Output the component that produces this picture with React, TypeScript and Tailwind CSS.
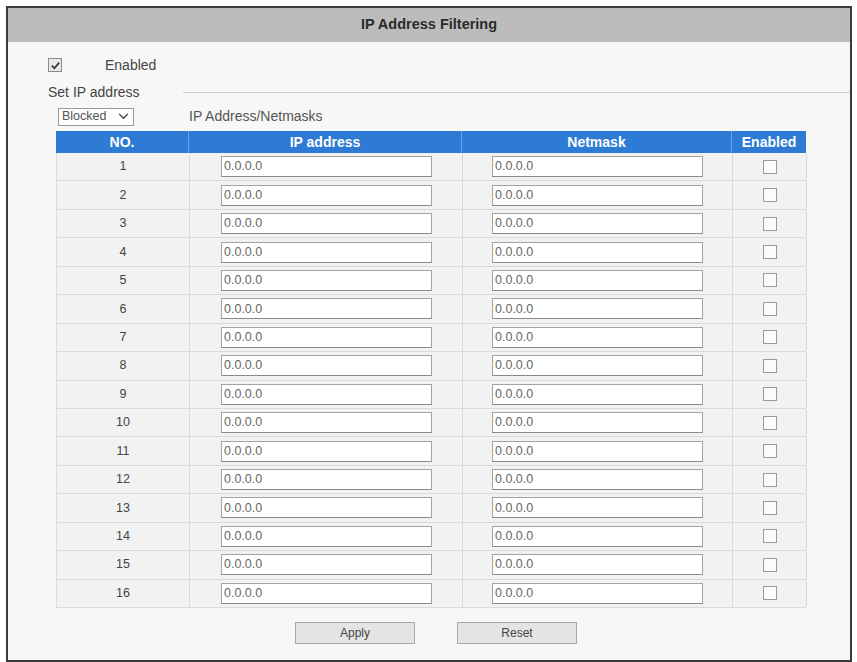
import React from 'react';

const rows = Array.from({ length: 16 }, (_, i) => i + 1);

function CheckMark() {
  return (
    <span className="flex h-[14px] w-[14px] items-center justify-center border border-[#8a8a8a] bg-[#e9e9e9]">
      <svg viewBox="0 0 12 12" className="h-[11px] w-[11px]">
        <path d="M2 6.2 L4.8 9 L10 2.8" fill="none" stroke="#333" strokeWidth="1.9" />
      </svg>
    </span>
  );
}

export default function App() {
  return (
    <div className="h-[662px] w-[857px] bg-white pl-[6px] pt-[6px] font-['Liberation_Sans',Arial,sans-serif] text-[#333]">
      <div className="flex h-[656px] w-[846px] flex-col border-2 border-[#3a3a3a] bg-[#f7f7f7]">
        <div className="flex h-[34px] items-center justify-center bg-[#bcbcbc] text-[14.5px] font-bold text-[#2b2b2b]">
          IP Address Filtering
        </div>

        <div className="flex flex-col pl-[40px]">
          <div className="mt-[16px] flex h-[14px] items-center">
            <CheckMark />
            <span className="ml-[43px] text-[14px] text-[#444]">Enabled</span>
          </div>

          <div className="mt-[13px] flex h-[14px] items-center">
            <span className="text-[14px] text-[#444]">Set IP address</span>
            <div className="ml-[43px] mt-[1px] h-px flex-1 bg-[#d2d2d2]" />
          </div>

          <div className="mt-[8px] flex h-[19px] items-center pl-[10px]">
            <div className="flex h-[18px] w-[76px] items-center justify-between border border-[#9a9a9a] bg-white px-[3px] text-[12.5px] text-[#555]">
              <span>Blocked</span>
              <svg viewBox="0 0 12 8" className="mr-[1px] h-[7px] w-[11px]">
                <path d="M1 1 L6 6 L11 1" fill="none" stroke="#444" strokeWidth="1.6" />
              </svg>
            </div>
            <span className="ml-[55px] text-[14px] text-[#555]">IP Address/Netmasks</span>
          </div>

          <div className="ml-[8px] mt-[5px] w-[750px]">
            <div className="grid h-[22px] grid-cols-[133px_273px_270px_74px] bg-[#2d7bd4] text-[14px] font-bold text-white">
              <div className="flex items-center justify-center border-r border-[#6aa3e3]">NO.</div>
              <div className="flex items-center justify-center border-r border-[#6aa3e3]">IP address</div>
              <div className="flex items-center justify-center border-r border-[#6aa3e3]">Netmask</div>
              <div className="flex items-center justify-center">Enabled</div>
            </div>
            <div className="border-l border-[#dadada]">
              {rows.map((n) => (
                <div
                  key={n}
                  className="grid h-[28.44px] grid-cols-[133px_273px_270px_74px] border-b border-[#dadada] bg-[#f2f2f2]"
                >
                  <div className="flex items-center justify-center border-r border-[#dadada] text-[12.5px] text-[#444]">
                    {n}
                  </div>
                  <div className="flex items-center border-r border-[#dadada] pl-[31px]">
                    <div className="flex h-[21px] w-[211px] items-center border border-[#a3a3a3] border-b-[#8a8a8a] bg-white pl-[2px] text-[12.5px] text-[#666]">
                      0.0.0.0
                    </div>
                  </div>
                  <div className="flex items-center border-r border-[#dadada] pl-[29px]">
                    <div className="flex h-[21px] w-[211px] items-center border border-[#a3a3a3] border-b-[#8a8a8a] bg-white pl-[2px] text-[12.5px] text-[#666]">
                      0.0.0.0
                    </div>
                  </div>
                  <div className="flex items-center justify-center border-r border-[#dadada]">
                    <span className="h-[14px] w-[14px] border border-[#9a9a9a] bg-[#fbfbfb]" />
                  </div>
                </div>
              ))}
            </div>
          </div>

          <div className="ml-[247px] mt-[14px] flex gap-[42px]">
            <button className="h-[22px] w-[120px] border border-[#a8a8a8] bg-[#e4e4e4] text-[12px] text-[#444]">
              Apply
            </button>
            <button className="h-[22px] w-[120px] border border-[#a8a8a8] bg-[#e4e4e4] text-[12px] text-[#444]">
              Reset
            </button>
          </div>
        </div>
      </div>
    </div>
  );
}
